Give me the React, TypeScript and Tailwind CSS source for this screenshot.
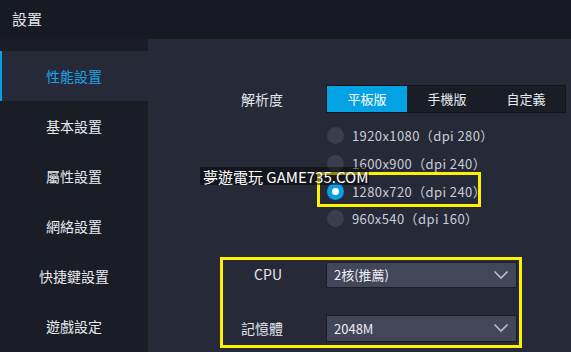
import React from "react";

const font = { fontFamily: '"Noto Sans CJK TC", "Noto Sans", sans-serif' };

function Chevron() {
  return (
    <svg width="16" height="10" viewBox="0 0 16 10" className="shrink-0">
      <path d="M1.5 1.5 L8 8 L14.5 1.5" fill="none" stroke="#b9bdca" strokeWidth="1.6" />
    </svg>
  );
}

function Radio({ label, checked }: { label: string; checked?: boolean }) {
  return (
    <div className="flex items-center h-[27.7px]">
      {checked ? (
        <div className="w-[17px] h-[17px] rounded-full bg-[#0a9fe4] flex items-center justify-center">
          <div className="w-[7px] h-[7px] rounded-full bg-white" />
        </div>
      ) : (
        <div className="w-[17px] h-[17px] rounded-full bg-[#3b3e4c]" />
      )}
      <span className="ml-[8px] text-[13px] tracking-[0.4px] text-[#c9ccd6] leading-none">{label}</span>
    </div>
  );
}

export default function App() {
  const items = ["性能設置", "基本設置", "屬性設置", "網絡設置", "快捷鍵設置", "遊戲設定"];
  return (
    <div style={font} className="w-[571px] h-[352px] overflow-hidden flex flex-col bg-[#262938] relative">
      <div className="h-[39px] shrink-0 bg-[#171a22] flex items-center px-[12px] text-[15px] text-[#e4e6ec]">
        設置
      </div>
      <div className="flex flex-1">
        <div className="w-[148px] shrink-0 bg-[#1a1d25] pt-[12px]">
          {items.map((t, i) => (
            <div
              key={t}
              className={
                i === 0
                  ? "h-[50px] flex items-center justify-center bg-[#262938] border-l-2 border-[#0a9fe4] text-[14px] text-[#1ba3e6] pr-[2px]"
                  : "h-[50px] flex items-center justify-center text-[14px] text-[#e8eaf0]"
              }
            >
              {t}
            </div>
          ))}
        </div>
        <div className="flex-1 pt-[46px]">
          <div className="flex items-center">
            <div className="w-[135px] text-right text-[14px] text-[#e4e6ec]">解析度</div>
            <div className="ml-[43px] w-[240px] h-[28px] flex bg-[#1a1d25] border border-[#11131a]">
              <div className="w-[80px] bg-[#03a2e4] flex items-center justify-center text-[13px] text-white">平板版</div>
              <div className="w-[80px] flex items-center justify-center text-[13px] text-[#e8eaf0]">手機版</div>
              <div className="flex-1 flex items-center justify-center text-[13px] text-[#e8eaf0]">自定義</div>
            </div>
          </div>
          <div className="ml-[179px] mt-[9px] flex flex-col">
            <Radio label="1920x1080（dpi 280）" />
            <Radio label="1600x900（dpi 240）" />
            <Radio label="1280x720（dpi 240）" checked />
            <Radio label="960x540（dpi 160）" />
          </div>
          <div className="mt-[29px] flex items-center">
            <div className="w-[135px] text-right text-[14px] text-[#e4e6ec] pr-[1px]">CPU</div>
            <div className="ml-[43px] w-[191px] h-[26px] bg-[#424659] border border-[#1a1d26] flex items-center justify-between pl-[7px] pr-[7px]">
              <span className="text-[13px] text-[#eceef3]">2核(推薦)</span>
              <Chevron />
            </div>
          </div>
          <div className="mt-[27px] flex items-center">
            <div className="w-[135px] text-right text-[14px] text-[#e4e6ec]">記憶體</div>
            <div className="ml-[43px] w-[191px] h-[27px] bg-[#424659] border border-[#1a1d26] flex items-center justify-between pl-[7px] pr-[7px]">
              <span className="text-[13px] text-[#eceef3]">2048M</span>
              <Chevron />
            </div>
          </div>
        </div>
      </div>

      {/* annotation overlays */}
      <div className="absolute left-[317px] top-[172px] w-[164px] h-[35px] border-[3px] border-[#fff200]" />
      <div className="absolute left-[220px] top-[257px] w-[302px] h-[91px] border-[3px] border-[#fff200]" />
      <div className="absolute left-[200px] top-[167px] w-[169px] h-[18px] bg-[#000000]/45 flex items-center pl-[3px] text-[15px] text-white leading-none whitespace-nowrap">
        夢遊電玩 GAME735.COM
      </div>
    </div>
  );
}
